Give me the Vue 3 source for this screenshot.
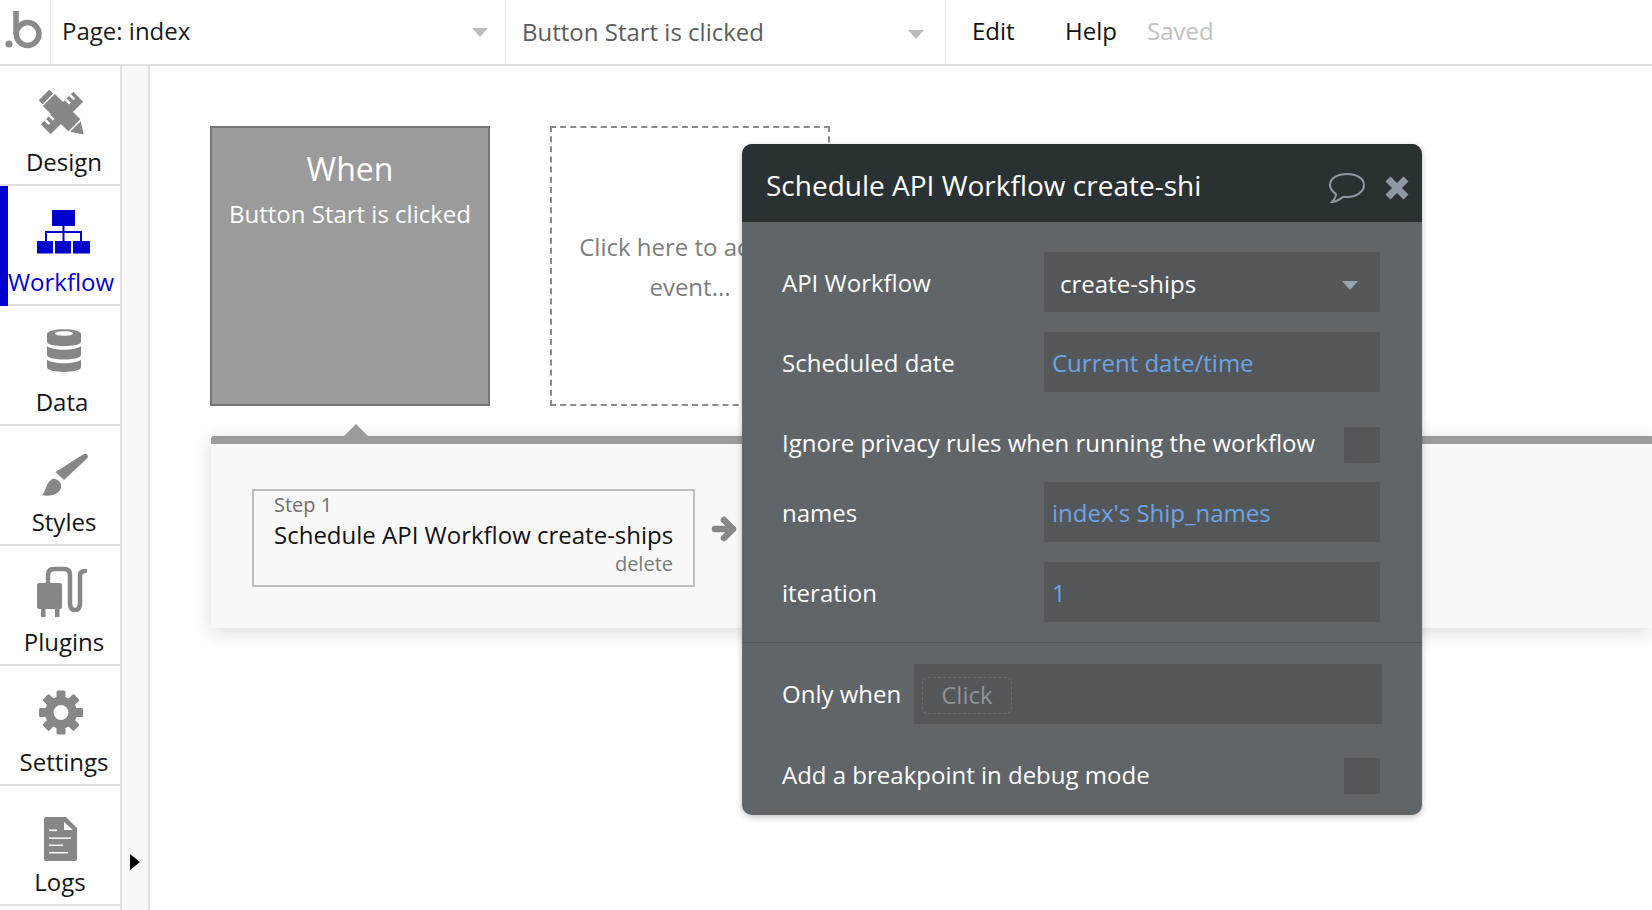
<script setup>
const navItems = [
  { label: 'Design', icon: 'design' },
  { label: 'Workflow', icon: 'workflow', active: true },
  { label: 'Data', icon: 'data' },
  { label: 'Styles', icon: 'styles' },
  { label: 'Plugins', icon: 'plugins' },
  { label: 'Settings', icon: 'settings' },
  { label: 'Logs', icon: 'logs' },
]
const fields = [
  { label: 'Scheduled date', value: 'Current date/time' },
]
const fields2 = [
  { label: 'names', value: "index's Ship_names" },
  { label: 'iteration', value: '1' },
]
const gearTeeth = [0, 45, 90, 135, 180, 225, 270, 315]
const rulerNotches = [-18, -12, 11, 17]
</script>

<template>
  <div class="app">
    <header class="topbar">
      <div class="logo">
        <svg width="50" height="64" viewBox="0 0 50 64">
          <circle cx="9" cy="44" r="3.6" fill="#8a8a8a" />
          <path d="M16 11 V34" stroke="#8a8a8a" stroke-width="5.5" fill="none" />
          <circle cx="27.6" cy="34" r="11.4" stroke="#8a8a8a" stroke-width="5.5" fill="none" />
        </svg>
      </div>
      <div class="select page-select">
        <span class="page-name">Page: index</span>
        <i class="caret"></i>
      </div>
      <div class="select event-select">
        <span class="event-name">Button Start is clicked</span>
        <i class="caret"></i>
      </div>
      <nav class="menu">
        <span class="edit">Edit</span>
        <span class="help">Help</span>
        <span class="saved">Saved</span>
      </nav>
    </header>

    <div class="main">
      <aside class="sidebar">
        <div v-for="item in navItems" :key="item.label" class="nav-item" :class="[item.icon, { active: item.active }]">
          <svg class="nav-icon" width="64" height="60" viewBox="0 0 64 60">
            <g v-if="item.icon === 'design'">
              <g transform="translate(34 28) rotate(-45)">
                <rect x="-23" y="-7" width="46" height="14" fill="#868786" />
                <rect v-for="n in rulerNotches" :key="n" :x="n" y="-7" width="2.6" height="6" fill="#fff" />
              </g>
              <g transform="translate(34 28) rotate(45)" fill="#868786">
                <rect x="-25.5" y="-7.5" width="5.5" height="15" />
                <rect x="-18.5" y="-8.5" width="36" height="17" />
                <path d="M19 -7.5 L30.5 0 L19 7.5 Z" />
              </g>
            </g>
            <g v-else-if="item.icon === 'workflow'" fill="#0000cc">
              <rect x="24" y="5" width="23" height="16" />
              <rect x="34.5" y="21" width="2" height="15" />
              <path d="M17 26 H54 V36 H52 V28 H19 V36 H17 Z" />
              <rect x="9" y="36" width="16" height="12.5" />
              <rect x="27" y="36" width="16" height="12.5" />
              <rect x="45" y="36" width="17" height="12.5" />
            </g>
            <g v-else-if="item.icon === 'data'" fill="#868786">
              <path fill-rule="evenodd" d="M19 9 C19 2.5 53 2.5 53 9 V17 C53 22.5 19 22.5 19 17 Z M27 8.5 C27 11.5 45 11.5 45 8.5 C45 5.5 27 5.5 27 8.5 Z" />
              <path d="M19 21 C25 26 47 26 53 21 V30 C53 36 19 36 19 30 Z" />
              <path d="M19 34.5 C25 39.5 47 39.5 53 34.5 V42 C53 48.5 19 48.5 19 42 Z" />
            </g>
            <g v-else-if="item.icon === 'styles'" fill="#868786">
              <path d="M55 9.5 Q59 7.5 60 11 Q60 12.5 58.5 14 L36 35 L27.5 27 Z" />
              <path d="M25 33.5 C31 34.5 34 38 33 43 C31 50 21 52 14 50 C18 47 17 38 25 33.5 Z" />
            </g>
            <g v-else-if="item.icon === 'plugins'" fill="#868786">
              <rect x="9" y="18" width="25" height="26" rx="2" />
              <rect x="13" y="44" width="4.5" height="8" />
              <rect x="27" y="44" width="4.5" height="8" />
              <path d="M20 18 V10 Q20 4 26 4 H36 Q42 4 42 10 V38 Q42 45 47 45 Q52 45 52 38 V11 Q52 6 57 6" fill="none" stroke="#868786" stroke-width="4.5" stroke-linecap="round" />
            </g>
            <g v-else-if="item.icon === 'settings'" fill="#868786">
              <g transform="translate(33 27.5)">
                <rect v-for="a in gearTeeth" :key="a" x="-4.5" y="-22" width="9" height="12" rx="1.5" :transform="`rotate(${a})`" />
                <path fill-rule="evenodd" d="M-16 0 A16 16 0 1 1 16 0 A16 16 0 1 1 -16 0 Z M-7.5 0 A7.5 7.5 0 1 0 7.5 0 A7.5 7.5 0 1 0 -7.5 0 Z" />
              </g>
            </g>
            <g v-else fill="#868786">
              <path fill-rule="evenodd" d="M16 14 Q16 12 18 12 H38 L49 23 V54 Q49 56 47 56 H18 Q16 56 16 54 Z M36 17 V25 H45 Z" />
              <g fill="#fff">
                <rect x="21" y="24.5" width="8" height="1.6" />
                <rect x="21" y="32.5" width="22" height="1.4" />
                <rect x="21" y="39.5" width="14" height="1.4" />
                <rect x="21" y="47" width="19" height="1.4" />
              </g>
            </g>
          </svg>
          <span class="nav-label">{{ item.label }}</span>
        </div>
      </aside>

      <div class="gutter"><i class="expand"></i></div>

      <section class="canvas">
        <div class="when-card">
          <div class="when-title">When</div>
          <div class="when-sub">Button Start is clicked</div>
        </div>
        <div class="add-card"><span>Click here to add an event...</span></div>

        <div class="panel">
          <i class="pointer"></i>
          <div class="step">
            <div class="step-no">Step 1</div>
            <div class="step-title">Schedule API Workflow create-ships</div>
            <div class="step-del">delete</div>
          </div>
          <svg class="arrow" width="27" height="28" viewBox="0 0 27 28">
            <path d="M4 14 H22 M13 5 L22 14 L13 23" fill="none" stroke="#868786" stroke-width="6.5" stroke-linecap="round" stroke-linejoin="round" />
          </svg>
        </div>

        <div class="popup">
          <div class="popup-head">
            <span class="popup-title">Schedule API Workflow create-shi</span>
            <svg class="bubble" width="38" height="32" viewBox="0 0 38 32">
              <path d="M19 2 C10 2 2 6 2 13 C2 17 5 20 8 22 C8 25 6 28 4 30 C8 30 12 27 15 25 C17 25 18 25 19 25 C28 25 36 20 36 13 C36 6 28 2 19 2 Z" fill="none" stroke="#8e99a3" stroke-width="2" />
            </svg>
            <svg class="close" width="26" height="26" viewBox="0 0 26 26">
              <path d="M4 4 L22 22 M22 4 L4 22" stroke="#8e99a3" stroke-width="7" />
            </svg>
          </div>
          <div class="popup-body">
            <div class="row">
              <label>API Workflow</label>
              <div class="input drop"><span>create-ships</span><i class="caret light"></i></div>
            </div>
            <div v-for="f in fields" :key="f.label" class="row">
              <label>{{ f.label }}</label>
              <div class="input dyn">{{ f.value }}</div>
            </div>
            <div class="row check-row first">
              <label>Ignore privacy rules when running the workflow</label>
              <div class="check"></div>
            </div>
            <div v-for="f in fields2" :key="f.label" class="row tight">
              <label>{{ f.label }}</label>
              <div class="input dyn">{{ f.value }}</div>
            </div>
            <div class="divider"></div>
            <div class="row only">
              <label>Only when</label>
              <div class="input wide"><span class="click">Click</span></div>
            </div>
            <div class="row check-row last">
              <label>Add a breakpoint in debug mode</label>
              <div class="check"></div>
            </div>
          </div>
        </div>
      </section>
    </div>
  </div>
</template>

<style>
html, body { margin: 0; overflow: hidden; background: #fff; }
</style>

<style scoped>
.app {
  width: 1652px;
  height: 910px;
  display: flex;
  flex-direction: column;
  overflow: hidden;
  font-family: "Open Sans", "Noto Sans", sans-serif;
  color: #111;
  background: #fff;
}
.topbar {
  height: 64px;
  flex: none;
  display: flex;
  align-items: stretch;
  border-bottom: 2px solid #e0e0e0;
}
.logo { width: 50px; flex: none; border-right: 1px solid #ededed; }
.logo svg { display: block; }
.select {
  display: flex;
  align-items: center;
  justify-content: space-between;
  border-right: 1px solid #ededed;
  box-sizing: border-box;
}
.page-select { width: 455px; padding: 0 17px 0 11px; }
.event-select { width: 440px; padding: 4px 21px 0 16px; }
.page-name { font-size: 24px; color: #1b1b1b; margin-bottom: 4px; }
.event-name { font-size: 24px; color: #5c5c5c; margin-bottom: 6px; }
.caret {
  width: 0; height: 0;
  border-left: 8px solid transparent;
  border-right: 8px solid transparent;
  border-top: 9px solid #bcbcbc;
}
.caret.light { border-top-color: #98a3ad; margin: 4px 6px 0 0; }
.menu { display: flex; align-items: center; font-size: 24px; padding: 0 0 4px 26px; }
.edit { width: 93px; }
.help { width: 82px; }
.saved { color: #c2c2c2; }

.main { flex: 1; display: flex; min-height: 0; }
.sidebar { width: 122px; flex: none; box-sizing: border-box; border-right: 2px solid #e0e0e0; }
.nav-item {
  height: 120px;
  box-sizing: border-box;
  border-bottom: 2px solid #e0e0e0;
  display: flex;
  flex-direction: column;
  align-items: center;
  color: #141414;
  font-size: 24px;
  position: relative;
}
.nav-icon { margin-top: 19px; flex: none; height: 60px; }
.nav-label { line-height: 30px; margin-top: 2px; }
.design .nav-label, .styles .nav-label, .plugins .nav-label, .settings .nav-label { padding-left: 8px; }
.workflow .nav-label { padding-left: 2px; }
.data .nav-label { padding-left: 4px; }
.nav-item.active { color: #0000cc; }
.nav-item.active::before {
  content: "";
  position: absolute;
  left: 0; top: 0; bottom: -2px;
  width: 8px;
  background: #0000cc;
}
.gutter {
  width: 28px;
  flex: none;
  box-sizing: border-box;
  border-right: 2px solid #e0e0e0;
  background: #f8f8f8;
  position: relative;
}
.expand {
  position: absolute;
  left: 8px; top: 788px;
  width: 0; height: 0;
  border-top: 8px solid transparent;
  border-bottom: 8px solid transparent;
  border-left: 10px solid #000;
}
.canvas { flex: 1; position: relative; overflow: hidden; background: #fff; }

.when-card {
  position: absolute;
  left: 60px; top: 60px;
  width: 280px; height: 280px;
  box-sizing: border-box;
  background: #9b9b9b;
  border: 2px solid #757575;
  color: #fff;
  text-align: center;
}
.when-title { font-size: 32px; line-height: 40px; margin-top: 21px; }
.when-sub { font-size: 24px; line-height: 32px; margin-top: 9px; }
.add-card {
  position: absolute;
  left: 400px; top: 60px;
  width: 280px; height: 280px;
  box-sizing: border-box;
  border: 2px dashed #8a8a8a;
  color: #7d7d7d;
  font-size: 24px;
  line-height: 40px;
  display: flex;
  align-items: center;
  justify-content: center;
  text-align: center;
  padding: 2px 20px 0;
}
.panel {
  position: absolute;
  left: 61px; top: 370px; right: 0;
  height: 192px;
  box-sizing: border-box;
  border-top: 8px solid #9b9b9b;
  border-top-left-radius: 3px;
  background: #f8f8f8;
  box-shadow: 0 4px 20px rgba(0,0,0,.15);
  display: flex;
  align-items: flex-start;
}
.pointer {
  position: absolute;
  left: 132px; top: -20px;
  width: 0; height: 0;
  border-left: 13px solid transparent;
  border-right: 13px solid transparent;
  border-bottom: 13px solid #9b9b9b;
}
.step {
  width: 443px;
  height: 98px;
  box-sizing: border-box;
  margin: 45px 0 0 41px;
  border: 2px solid #bcbfc2;
  padding: 0 20px;
  display: flex;
  flex-direction: column;
}
.step-no { font-size: 20px; line-height: 26px; color: #6f6f6f; margin-top: 1px; }
.step-title { font-size: 24px; line-height: 32px; color: #111; margin-top: 1px; white-space: nowrap; }
.step-del { font-size: 20px; line-height: 26px; color: #7b7b7b; text-align: right; }
.arrow { margin: 71px 0 0 16px; flex: none; }

.popup {
  position: absolute;
  left: 592px; top: 78px;
  width: 680px;
  height: 671px;
  border-radius: 10px;
  overflow: hidden;
  background: #606569;
  box-shadow: 0 2px 6px rgba(0,0,0,.25);
  color: #fff;
}
.popup-head {
  height: 78px;
  background: #2a3133;
  display: flex;
  align-items: center;
  padding: 0 12px 0 24px;
}
.popup-title { font-size: 28px; flex: 1; white-space: nowrap; padding-top: 4px; }
.bubble { margin-right: 18px; margin-top: 10px; }
.close { margin-top: 10px; }
.popup-body { padding: 30px 42px 0 40px; font-size: 24px; }
.row { display: flex; align-items: center; justify-content: space-between; height: 60px; margin-bottom: 20px; }
.input {
  width: 336px;
  height: 60px;
  box-sizing: border-box;
  background: #53575a;
  border-radius: 2px;
  display: flex;
  align-items: center;
  padding: 0 8px;
}
.dyn { color: #6ea3e6; }
.drop { justify-content: space-between; padding: 2px 16px 0 16px; color: #fff; }
.check { width: 36px; height: 36px; background: #53575a; border-radius: 2px; flex: none; }
.check-row.first { height: 36px; margin-bottom: 19px; margin-top: 35px; }
.check-row.first label { padding-bottom: 6px; }
.row.tight { margin-bottom: 20px; }
.divider { height: 1px; background: #53575a; margin: 0 -42px 21px -40px; }
.only { justify-content: flex-start; }
.only label { padding-bottom: 2px; white-space: nowrap; flex: none; }
.input.wide { width: 468px; margin-left: 13px; flex: none; padding: 0 8px; }
.click {
  color: #8f9395;
  border: 1px dashed #686c6f;
  border-radius: 6px;
  padding: 0 18px;
  height: 35px;
  line-height: 33px;
  margin-top: 2px;
}
.check-row.last { height: 36px; margin-top: 34px; }
.check-row.last label { padding-bottom: 4px; }
</style>
